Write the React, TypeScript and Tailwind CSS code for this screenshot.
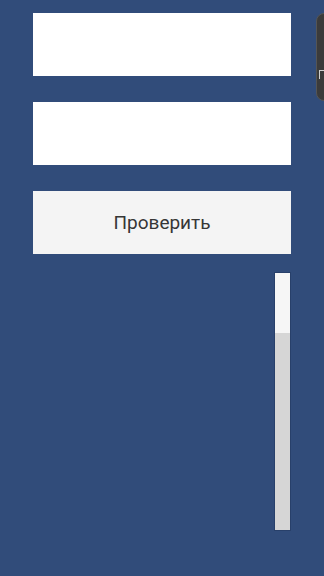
export default function App() {
  return (
    <div className="relative h-[576px] w-[324px] overflow-hidden bg-[#314c7a] font-['Roboto',sans-serif]">
      <div className="flex flex-col gap-[26px] pl-[33px] pt-[13px] w-[291px]">
        <input className="h-[63px] w-[258px] bg-white outline-none" />
        <input className="h-[63px] w-[258px] bg-white outline-none" />
        <button
          type="button"
          className="h-[63px] w-[258px] bg-[#f4f4f4] pt-[1px] text-[19px] text-[#363636]"
        >
          Проверить
        </button>
        <div className="-mt-[8px] flex justify-end">
          <div className="flex h-[259px] w-[17px] flex-col border border-[#28406a] bg-[#d6d6d6]">
            <div className="h-[60px] bg-[#f6f6f6]" />
          </div>
        </div>
      </div>
      <div className="absolute left-[316px] top-[13px] h-[88px] w-[20px] rounded-l-[8px] border border-[#555555] bg-[#3b3b3b]">
        <div className="absolute left-[2px] top-[56px] h-[9px] w-[6px] border-l border-t border-[#cfcfcf]" />
      </div>
    </div>
  );
}
